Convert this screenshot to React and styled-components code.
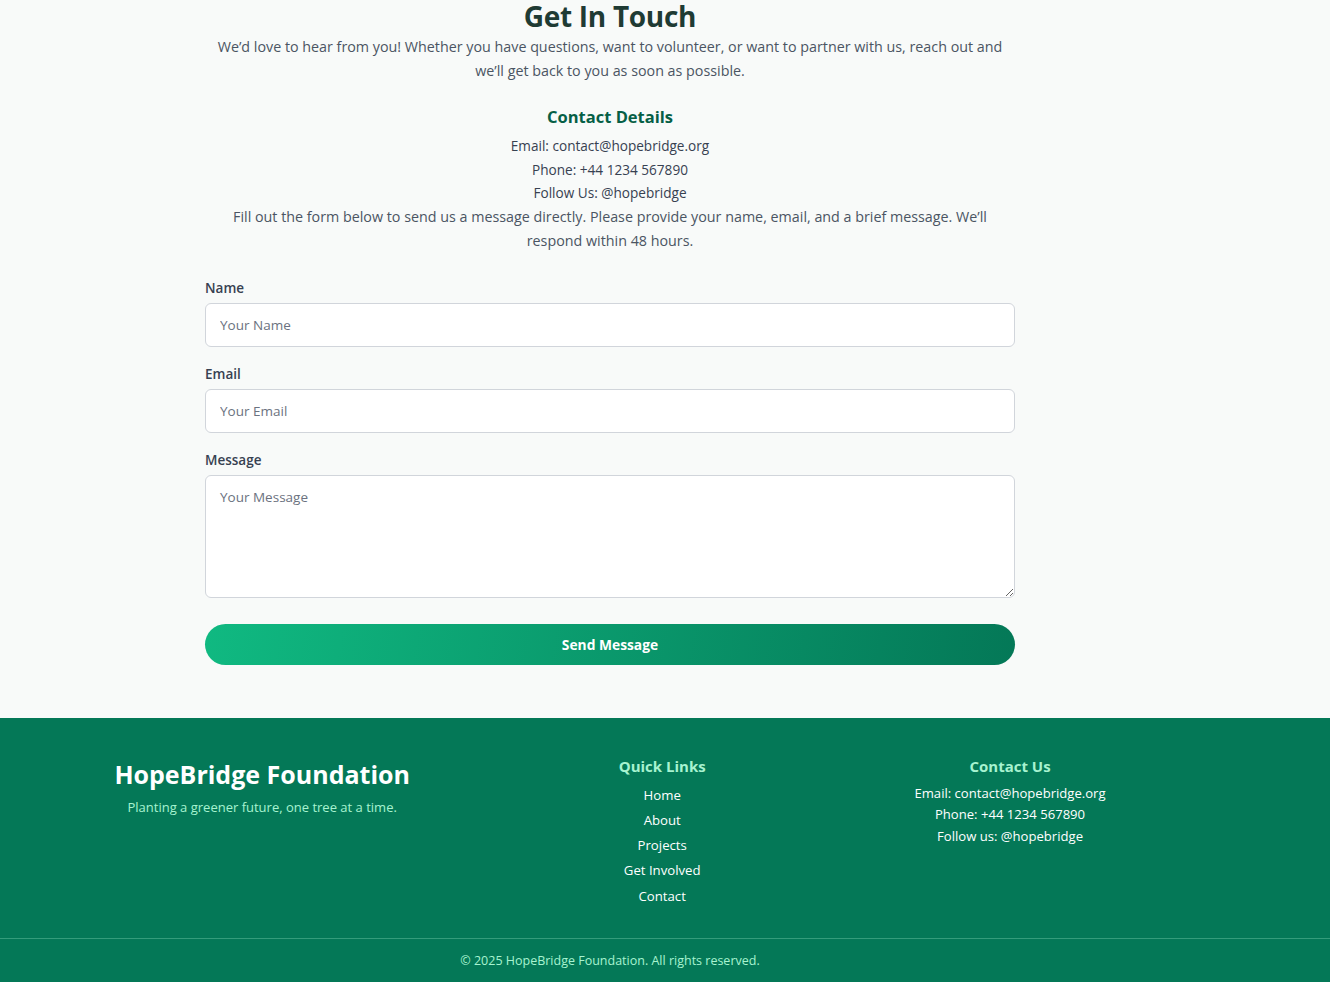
import React from "react";
import styled, { createGlobalStyle } from "styled-components";

const Global = createGlobalStyle`
  html, body { margin: 0; padding: 0; }
  body {
    background: #f8faf9;
    font-family: "Open Sans", "Noto Sans", sans-serif;
    color: #4b5563;
  }
  * { box-sizing: border-box; }
`;

const Main = styled.main`
  width: 1220px;
  padding: 0 0 53px;
`;

const Container = styled.section`
  width: 810px;
  margin: 0 auto;
  text-align: center;
`;

const Title = styled.h2`
  margin: 0 0 3px;
  font-size: 28px;
  line-height: 32px;
  font-weight: 700;
  color: #1f3b34;
  letter-spacing: -0.3px;
`;

const Lead = styled.p`
  margin: 0;
  font-size: 14.3px;
  line-height: 24px;
  color: #4b5563;
  padding: 0 8px;
`;

const DetailsTitle = styled.h3`
  margin: 22px 0 5px;
  font-size: 16.5px;
  line-height: 24px;
  font-weight: 700;
  color: #065f46;
`;

const DetailLine = styled.p`
  margin: 0;
  font-size: 13.6px;
  line-height: 23.5px;
  color: #374151;
`;

const Form = styled.form`
  margin-top: 25px;
  display: flex;
  flex-direction: column;
  text-align: left;
`;

const Field = styled.div`
  display: flex;
  flex-direction: column;
  margin-bottom: ${(p) => (p.$last ? "26px" : "17px")};
`;

const Label = styled.label`
  font-size: 13.5px;
  font-weight: 600;
  color: #374151;
  line-height: 20px;
  margin-bottom: 5px;
`;

const inputStyles = `
  width: 100%;
  border: 1px solid #d1d5db;
  border-radius: 6px;
  background: #ffffff;
  padding: 0 14px;
  font-family: "Open Sans", "Noto Sans", sans-serif;
  font-size: 13.5px;
  color: #374151;
  outline: none;
  &::placeholder { color: #6b7280; }
`;

const Input = styled.input`
  ${inputStyles}
  height: 44px;
`;

const TextArea = styled.textarea`
  ${inputStyles}
  height: 123px;
  padding-top: 12px;
  resize: vertical;
  display: block;
`;

const Button = styled.button`
  height: 41px;
  border: none;
  border-radius: 999px;
  background: linear-gradient(100deg, #10b981 0%, #047857 100%);
  color: #ffffff;
  font-family: "Open Sans", "Noto Sans", sans-serif;
  font-size: 13.8px;
  font-weight: 700;
  cursor: pointer;
`;

const Footer = styled.footer`
  background: #047857;
  color: #ffffff;
`;

const FooterCols = styled.div`
  width: 1220px;
  display: flex;
  justify-content: space-around;
  align-items: flex-start;
  padding: 37px 10px 29px;
`;

const Col = styled.div`
  display: flex;
  flex-direction: column;
  align-items: center;
  text-align: center;
`;

const Brand = styled.h2`
  margin: 0 0 7px;
  padding-top: 3px;
  font-size: 25px;
  line-height: 32px;
  font-weight: 700;
  color: #ffffff;
`;

const Tagline = styled.p`
  margin: 0;
  font-size: 13px;
  line-height: 20px;
  color: #a7f3d0;
`;

const ColTitle = styled.h3`
  margin: 0 0 6px;
  font-size: 15px;
  line-height: 22px;
  font-weight: 700;
  color: #a7f3d0;
`;

const LinkList = styled.ul`
  list-style: none;
  margin: 0;
  padding: 0;
  display: flex;
  flex-direction: column;
  align-items: center;
`;

const LinkItem = styled.li`
  font-size: 13.2px;
  line-height: 25.3px;
  color: #ffffff;
`;

const ContactLine = styled.p`
  margin: 0;
  font-size: 13.1px;
  line-height: 21.5px;
  color: #ffffff;
`;

const Bottom = styled.div`
  border-top: 1px solid rgba(167, 243, 208, 0.3);
`;

const Copyright = styled.p`
  width: 1220px;
  margin: 0;
  text-align: center;
  font-size: 12.5px;
  line-height: 20px;
  padding: 12px 0 11px;
  color: #a7f3d0;
`;

export default function App() {
  return (
    <>
      <Global />
      <Main>
        <Container>
          <Title>Get In Touch</Title>
          <Lead>
            We’d love to hear from you! Whether you have questions, want to volunteer, or want to
            partner with us, reach out and we’ll get back to you as soon as possible.
          </Lead>
          <DetailsTitle>Contact Details</DetailsTitle>
          <DetailLine>Email: contact@hopebridge.org</DetailLine>
          <DetailLine>Phone: +44 1234 567890</DetailLine>
          <DetailLine>Follow Us: @hopebridge</DetailLine>
          <Lead>
            Fill out the form below to send us a message directly. Please provide your name, email,
            and a brief message. We’ll respond within 48 hours.
          </Lead>
          <Form onSubmit={(e) => e.preventDefault()}>
            <Field>
              <Label htmlFor="name">Name</Label>
              <Input id="name" placeholder="Your Name" />
            </Field>
            <Field>
              <Label htmlFor="email">Email</Label>
              <Input id="email" type="email" placeholder="Your Email" />
            </Field>
            <Field $last>
              <Label htmlFor="message">Message</Label>
              <TextArea id="message" placeholder="Your Message" />
            </Field>
            <Button type="submit">Send Message</Button>
          </Form>
        </Container>
      </Main>
      <Footer>
        <FooterCols>
          <Col>
            <Brand>HopeBridge Foundation</Brand>
            <Tagline>Planting a greener future, one tree at a time.</Tagline>
          </Col>
          <Col>
            <ColTitle>Quick Links</ColTitle>
            <LinkList>
              <LinkItem>Home</LinkItem>
              <LinkItem>About</LinkItem>
              <LinkItem>Projects</LinkItem>
              <LinkItem>Get Involved</LinkItem>
              <LinkItem>Contact</LinkItem>
            </LinkList>
          </Col>
          <Col>
            <ColTitle>Contact Us</ColTitle>
            <ContactLine>Email: contact@hopebridge.org</ContactLine>
            <ContactLine>Phone: +44 1234 567890</ContactLine>
            <ContactLine>Follow us: @hopebridge</ContactLine>
          </Col>
        </FooterCols>
        <Bottom>
          <Copyright>© 2025 HopeBridge Foundation. All rights reserved.</Copyright>
        </Bottom>
      </Footer>
    </>
  );
}
